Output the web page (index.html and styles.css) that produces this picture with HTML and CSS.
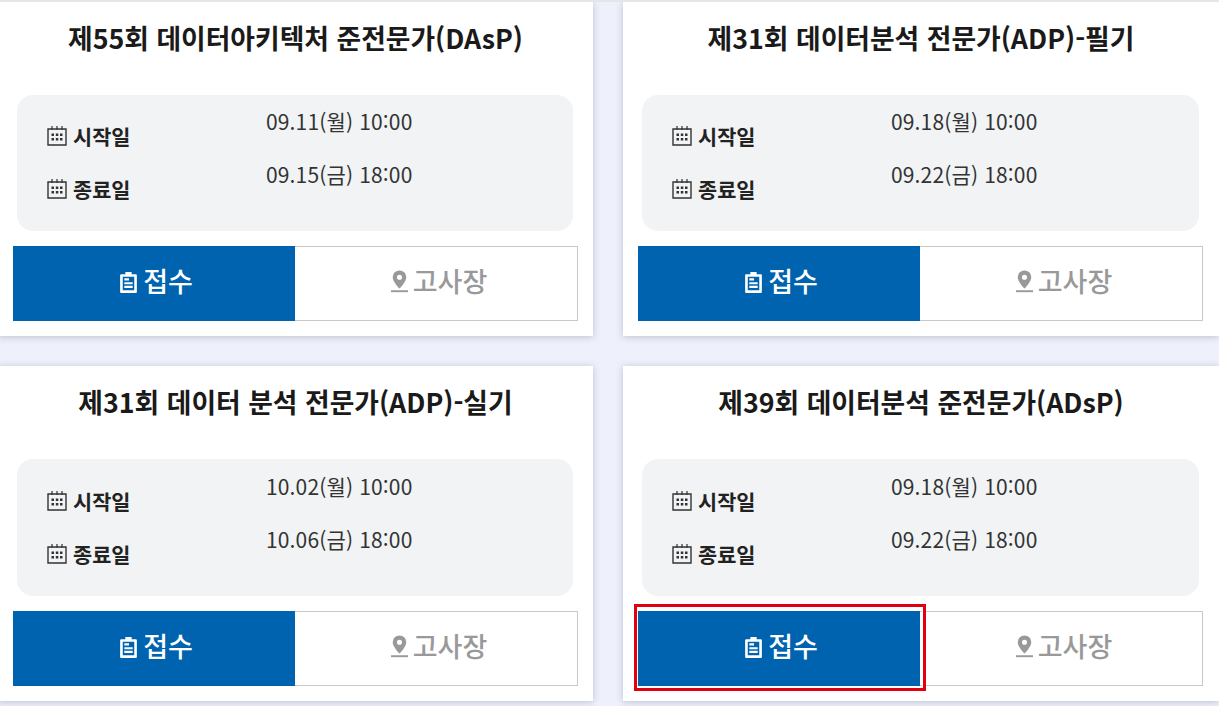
FILE: index.html
```html
<!DOCTYPE html>
<html lang="ko">
<head>
    <meta charset="UTF-8">
    <meta name="viewport" content="width=device-width, initial-scale=1.0">
    <title>시험 접수</title>
    <link rel="stylesheet" href="styles.css">
</head>
<body>
    <svg class="icon-defs" width="0" height="0" aria-hidden="true">
        <symbol id="icon-calendar" viewBox="0 0 20 21">
            <path d="M1 4h18v16H1z" fill="none" stroke="currentColor" stroke-width="1.4"/>
            <path d="M5 1v4M10 1v4M15 1v4" fill="none" stroke="currentColor" stroke-width="1.2"/>
            <path d="M4.500 8.500h2.500v2.500H4.500zM8.800 8.500h2.500v2.500H8.800zM13 8.500h2.500v2.500H13zM4.500 13h2.500v2.500H4.500zM8.800 13h2.500v2.500H8.800zM13 13h2.500v2.500H13z" fill="currentColor"/>
        </symbol>
        <symbol id="icon-clipboard" viewBox="0 0 18 22">
            <path d="M2 3h4V1h6v2h4a1 1 0 0 1 1 1v16a1 1 0 0 1-1 1H2a1 1 0 0 1-1-1V4a1 1 0 0 1 1-1zM3.500 5.500v13h11v-13z" fill="currentColor" fill-rule="evenodd"/>
            <path d="M5 7h4.500v2.200H5zM5 10.700h8v2H5zM5 14.200h8v2H5z" fill="currentColor"/>
        </symbol>
        <symbol id="icon-pin" viewBox="0 0 16 22">
            <path d="M8 1a6.400 6.400 0 0 0-6.400 6.400C1.600 11.800 8 18 8 18s6.400-6.200 6.400-10.600A6.400 6.400 0 0 0 8 1zm0 8.800a2.400 2.400 0 1 1 0-4.800 2.400 2.400 0 0 1 0 4.800z" fill="currentColor" fill-rule="evenodd"/>
            <path d="M0 19.700h16v1.800H0z" fill="currentColor"/>
        </symbol>
    </svg>

    <div class="card-grid">
        <div class="exam-card">
            <h2>제55회 데이터아키텍처 준전문가(DAsP)</h2>
            <div class="date-box">
                <div class="date-labels">
                    <span class="date-label"><svg class="icon-calendar"><use href="#icon-calendar"/></svg>시작일</span>
                    <span class="date-label"><svg class="icon-calendar"><use href="#icon-calendar"/></svg>종료일</span>
                </div>
                <div class="date-values">
                    <span>09.11(월) 10:00</span>
                    <span>09.15(금) 18:00</span>
                </div>
            </div>
            <div class="card-buttons">
                <a class="btn btn-apply"><svg class="icon-clipboard"><use href="#icon-clipboard"/></svg><span class="btn-text">접수</span></a>
                <a class="btn btn-place"><svg class="icon-pin"><use href="#icon-pin"/></svg><span class="btn-text">고사장</span></a>
            </div>
        </div>

        <div class="exam-card">
            <h2>제31회 데이터분석 전문가(ADP)-필기</h2>
            <div class="date-box">
                <div class="date-labels">
                    <span class="date-label"><svg class="icon-calendar"><use href="#icon-calendar"/></svg>시작일</span>
                    <span class="date-label"><svg class="icon-calendar"><use href="#icon-calendar"/></svg>종료일</span>
                </div>
                <div class="date-values">
                    <span>09.18(월) 10:00</span>
                    <span>09.22(금) 18:00</span>
                </div>
            </div>
            <div class="card-buttons">
                <a class="btn btn-apply"><svg class="icon-clipboard"><use href="#icon-clipboard"/></svg><span class="btn-text">접수</span></a>
                <a class="btn btn-place"><svg class="icon-pin"><use href="#icon-pin"/></svg><span class="btn-text">고사장</span></a>
            </div>
        </div>

        <div class="exam-card">
            <h2>제31회 데이터 분석 전문가(ADP)-실기</h2>
            <div class="date-box">
                <div class="date-labels">
                    <span class="date-label"><svg class="icon-calendar"><use href="#icon-calendar"/></svg>시작일</span>
                    <span class="date-label"><svg class="icon-calendar"><use href="#icon-calendar"/></svg>종료일</span>
                </div>
                <div class="date-values">
                    <span>10.02(월) 10:00</span>
                    <span>10.06(금) 18:00</span>
                </div>
            </div>
            <div class="card-buttons">
                <a class="btn btn-apply"><svg class="icon-clipboard"><use href="#icon-clipboard"/></svg><span class="btn-text">접수</span></a>
                <a class="btn btn-place"><svg class="icon-pin"><use href="#icon-pin"/></svg><span class="btn-text">고사장</span></a>
            </div>
        </div>

        <div class="exam-card">
            <h2>제39회 데이터분석 준전문가(ADsP)</h2>
            <div class="date-box">
                <div class="date-labels">
                    <span class="date-label"><svg class="icon-calendar"><use href="#icon-calendar"/></svg>시작일</span>
                    <span class="date-label"><svg class="icon-calendar"><use href="#icon-calendar"/></svg>종료일</span>
                </div>
                <div class="date-values">
                    <span>09.18(월) 10:00</span>
                    <span>09.22(금) 18:00</span>
                </div>
            </div>
            <div class="card-buttons">
                <a class="btn btn-apply btn-marked"><svg class="icon-clipboard"><use href="#icon-clipboard"/></svg><span class="btn-text">접수</span></a>
                <a class="btn btn-place"><svg class="icon-pin"><use href="#icon-pin"/></svg><span class="btn-text">고사장</span></a>
            </div>
        </div>
    </div>
</body>
</html>
```

FILE: styles.css
```css
html, body {
    margin: 0;
    height: 706px;
    overflow: hidden;
}
body {
    background: #eef1fb;
    font-family: "Noto Sans CJK KR", "Noto Sans", sans-serif;
    font-feature-settings: "calt" 0;
    color: #222;
    border-top: 2px solid #e4e6ea;
    box-sizing: border-box;
}
.icon-defs {
    position: absolute;
}
.card-grid {
    display: grid;
    grid-template-columns: 595px 596px;
    grid-auto-rows: 334px;
    column-gap: 30px;
    row-gap: 30px;
    margin-left: -2px;
}
.exam-card {
    display: flex;
    flex-direction: column;
    background: #fff;
    box-shadow: 0 1px 7px rgba(110, 120, 150, 0.4);
    padding: 0 15px;
}
.exam-card:nth-child(n+3) {
    height: 335px;
}
.exam-card:nth-child(n+3) .date-box {
    height: 137px;
    padding-top: 13px;
}
.exam-card h2 {
    margin: 16px 0 0;
    height: 77px;
    font-size: 26.8px;
    line-height: 40px;
    font-weight: 700;
    text-align: center;
    color: #1a1a1a;
}
.date-box {
    display: flex;
    box-sizing: border-box;
    height: 136px;
    margin: 0 5px 0 4px;
    padding: 12px 30px 0;
    background: #f1f3f5;
    border-radius: 16px;
}
.date-labels {
    display: flex;
    flex-direction: column;
    width: 219px;
    padding-top: 14px;
    gap: 24px;
}
.date-label {
    display: flex;
    align-items: center;
    gap: 6px;
    height: 29px;
    font-size: 20.8px;
    font-weight: 700;
    color: #222;
}
.icon-calendar {
    width: 20px;
    height: 21px;
    color: #333;
}
.date-values {
    display: flex;
    flex-direction: column;
    gap: 24px;
    font-size: 21px;
    letter-spacing: 0.15px;
    line-height: 29px;
    color: #333;
}
.card-buttons {
    display: flex;
    margin-top: 15px;
    height: 75px;
}
.btn {
    position: relative;
    display: flex;
    align-items: center;
    justify-content: center;
    gap: 5px;
    box-sizing: border-box;
    font-size: 27px;
    font-weight: 500;
}
.btn-text {
    margin-top: -7px;
}
.btn-apply {
    width: 282px;
    padding-left: 4px;
    background: #0063af;
    color: #fff;
}
.btn-place {
    width: 283px;
    padding-left: 6px;
    background: #fff;
    border: 1px solid #c9c9c9;
    border-left: none;
    color: #999;
}
.btn-marked {
    z-index: 1;
}
.btn-marked::after {
    content: "";
    position: absolute;
    top: -7px;
    left: -4px;
    right: -6px;
    bottom: -5px;
    border: 3px solid #e1000f;
    box-shadow: inset 0 0 0 1px #fff;
}
.icon-clipboard {
    width: 19px;
    height: 23px;
    margin-top: -3px;
}
.icon-pin {
    width: 17px;
    height: 24px;
    margin-top: -5px;
}
```
